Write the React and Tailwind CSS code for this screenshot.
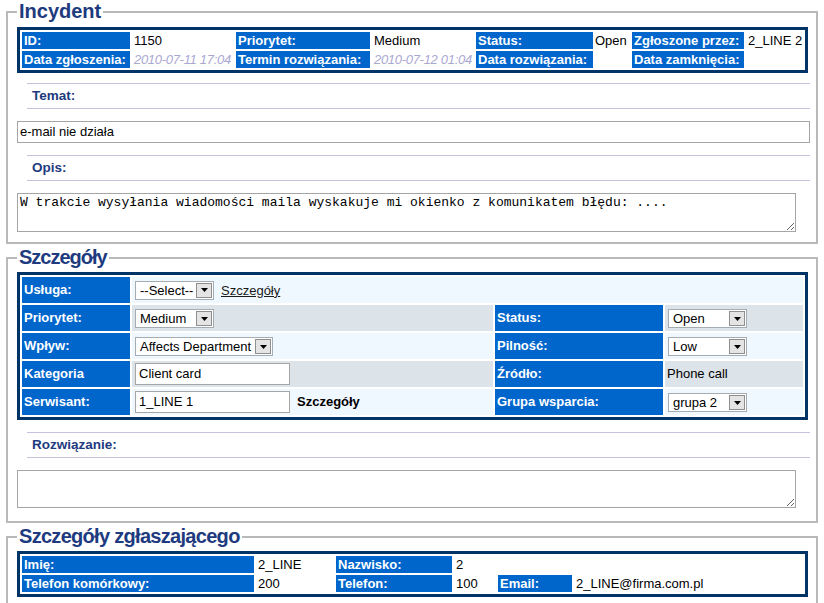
import React from 'react';

const Lbl = ({ children, className = '' }) => (
  <td className={`bg-[#0066cc] text-white font-bold px-[2px] whitespace-nowrap overflow-hidden ${className}`}>{children}</td>
);

const Val = ({ children, className = '' }) => (
  <td className={`px-[2px] whitespace-nowrap overflow-hidden ${className}`}>{children}</td>
);

const Select = ({ value, w }) => (
  <span className={`inline-flex items-center h-[19px] border border-[#a5acb2] bg-white align-middle ${w}`}>
    <span className="flex-1 pl-[4px] text-[13px] leading-[15px] whitespace-nowrap overflow-hidden">{value}</span>
    <span className="w-[16px] h-[15px] mr-[1px] border border-[#8f8f8f] bg-[#e4e4e4] flex items-center justify-center">
      <svg width="7" height="4" viewBox="0 0 7 4">
        <path d="M0 0h7L3.5 4z" fill="#000" />
      </svg>
    </span>
  </span>
);

const TextBox = ({ value }) => (
  <span className="inline-flex items-center w-[155px] h-[22px] border border-[#a5a5a5] bg-white pl-[3px] text-[13px] align-middle">{value}</span>
);

const SubHeader = ({ children }) => (
  <div className="ml-[10px] -mr-[2px] h-[26px] border-y border-[#c4c2de] flex items-center pl-[5px] text-[13.5px] font-bold text-[#1d3b7e]">
    {children}
  </div>
);

const Box = ({ title, className = '', legendCls = '', children }) => (
  <fieldset className={`mx-[6px] border-2 border-[#b9b9b9] pl-[9px] pr-[8px] ${className}`}>
    <legend className={`px-[2px] text-[20px] leading-[23px] font-bold text-[#1d3b7e] ${legendCls}`}>{title}</legend>
    {children}
  </fieldset>
);

const tableCls = 'w-full table-fixed border-separate border-spacing-[2px] border-[3px] border-[#003366] text-[13px]';

export default function App() {
  return (
    <div className="bg-white min-h-screen w-[824px] font-['Liberation_Sans',Arial,sans-serif] text-black">
      {/* Incydent */}
      <Box title="Incydent" className="pt-[4px] pb-[10px]">
        <table className={tableCls}>
          <colgroup>
            <col className="w-[108px]" />
            <col className="w-[102px]" />
            <col className="w-[134px]" />
            <col className="w-[102px]" />
            <col className="w-[117px]" />
            <col className="w-[35px]" />
            <col className="w-[112px]" />
            <col />
          </colgroup>
          <tbody>
            <tr className="h-[17px] leading-[17px]">
              <Lbl>ID:</Lbl>
              <Val>1150</Val>
              <Lbl>Priorytet:</Lbl>
              <Val>Medium</Val>
              <Lbl>Status:</Lbl>
              <Val className="pl-0">Open</Val>
              <Lbl>Zgłoszone przez:</Lbl>
              <Val>2_LINE 2</Val>
            </tr>
            <tr className="h-[17px] leading-[17px]">
              <Lbl>Data zgłoszenia:</Lbl>
              <Val className="italic text-[#a9a8d2] px-0 tracking-[-0.3px]">2010-07-11 17:04</Val>
              <Lbl>Termin rozwiązania:</Lbl>
              <Val className="italic text-[#a9a8d2] px-0 tracking-[-0.3px]">2010-07-12 01:04</Val>
              <Lbl>Data rozwiązania:</Lbl>
              <Val />
              <Lbl>Data zamknięcia:</Lbl>
              <Val />
            </tr>
          </tbody>
        </table>

        <div className="mt-[10px]">
          <SubHeader>Temat:</SubHeader>
        </div>
        <div className="mt-[12px] -mr-[2px] h-[22px] border border-[#a5a5a5] flex items-center pl-[2px] text-[13px]">
          e-mail nie działa
        </div>
        <div className="mt-[12px]">
          <SubHeader>Opis:</SubHeader>
        </div>
        <textarea
          readOnly
          defaultValue="W trakcie wysyłania wiadomości maila wyskakuje mi okienko z komunikatem błędu: ...."
          className="block mt-[12px] w-[779px] h-[39px] border border-[#a5a5a5] px-[2px] py-[1px] font-['Liberation_Mono','Courier_New',monospace] text-[13px] leading-[16px] outline-none"
        />
      </Box>

      {/* Szczegóły */}
      <Box title="Szczegóły" legendCls="tracking-[-1px]" className="mt-[2px] pt-[3px] pb-[13px]">
        <table className={tableCls}>
          <colgroup>
            <col className="w-[108px]" />
            <col className="w-[361px]" />
            <col className="w-[168px]" />
            <col />
          </colgroup>
          <tbody>
            <tr className="h-[26px]">
              <Lbl>Usługa:</Lbl>
              <td colSpan={3} className="bg-[#f0f8ff] px-[3px]">
                <Select value="--Select--" w="w-[79px]" />
                <span className="ml-[7px] underline text-[#1a1a1a] align-middle">Szczegóły</span>
              </td>
            </tr>
            <tr className="h-[26px]">
              <Lbl>Priorytet:</Lbl>
              <td className="bg-[#dce3e9] px-[3px]"><Select value="Medium" w="w-[79px]" /></td>
              <Lbl>Status:</Lbl>
              <td className="bg-[#dce3e9] px-[3px]"><Select value="Open" w="w-[79px]" /></td>
            </tr>
            <tr className="h-[26px]">
              <Lbl>Wpływ:</Lbl>
              <td className="bg-[#f0f8ff] px-[3px]"><Select value="Affects Department" w="w-[138px]" /></td>
              <Lbl>Pilność:</Lbl>
              <td className="bg-[#f0f8ff] px-[3px]"><Select value="Low" w="w-[79px]" /></td>
            </tr>
            <tr className="h-[26px]">
              <Lbl>Kategoria</Lbl>
              <td className="bg-[#dce3e9] px-[3px]"><TextBox value="Client card" /></td>
              <Lbl>Źródło:</Lbl>
              <td className="bg-[#dce3e9] px-[2px]">Phone call</td>
            </tr>
            <tr className="h-[26px]">
              <Lbl>Serwisant:</Lbl>
              <td className="bg-[#f0f8ff] px-[3px]">
                <TextBox value="1_LINE 1" />
                <span className="ml-[7px] font-bold align-middle">Szczegóły</span>
              </td>
              <Lbl>Grupa wsparcia:</Lbl>
              <td className="bg-[#f0f8ff] px-[3px]"><Select value="grupa 2" w="w-[79px]" /></td>
            </tr>
          </tbody>
        </table>

        <div className="mt-[12px]">
          <SubHeader>Rozwiązanie:</SubHeader>
        </div>
        <textarea
          readOnly
          className="block mt-[12px] w-[779px] h-[38px] border border-[#a5a5a5] px-[2px] py-[1px] text-[13px] outline-none"
        />
      </Box>

      {/* Szczegóły zgłaszającego */}
      <Box title="Szczegóły zgłaszającego" legendCls="tracking-[-0.7px]" className="mt-[2px] pt-[3px] pb-[10px]">
        <table className={tableCls}>
          <colgroup>
            <col className="w-[232px]" />
            <col className="w-[78px]" />
            <col className="w-[116px]" />
            <col className="w-[42px]" />
            <col className="w-[74px]" />
            <col />
          </colgroup>
          <tbody>
            <tr className="h-[17px] leading-[17px]">
              <Lbl>Imię:</Lbl>
              <Val>2_LINE</Val>
              <Lbl>Nazwisko:</Lbl>
              <Val>2</Val>
              <Val />
              <Val />
            </tr>
            <tr className="h-[17px] leading-[17px]">
              <Lbl>Telefon komórkowy:</Lbl>
              <Val>200</Val>
              <Lbl>Telefon:</Lbl>
              <Val>100</Val>
              <Lbl>Email:</Lbl>
              <Val>2_LINE@firma.com.pl</Val>
            </tr>
          </tbody>
        </table>
      </Box>
    </div>
  );
}
